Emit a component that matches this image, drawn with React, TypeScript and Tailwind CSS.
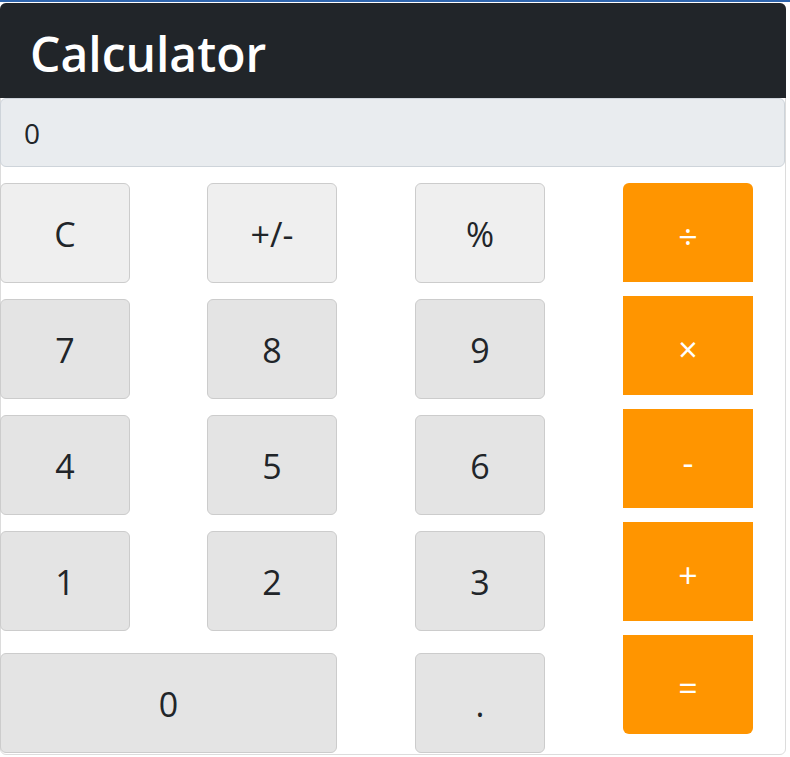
import React from "react";

const font = { fontFamily: '"Open Sans", "Noto Sans", sans-serif' };

function GrayBtn({ label, light, wide }: { label: string; light?: boolean; wide?: boolean }) {
  return (
    <button
      className={`${wide ? "col-span-2 w-[337px]" : "w-[130px]"} h-[100px] flex items-center justify-center rounded-[6px] border border-[#cccccc] text-[34px] text-[#212529] pt-[3px] ${light ? "bg-[#efefef]" : "bg-[#e4e4e4]"}`}
    >
      {label}
    </button>
  );
}

function OrangeBtn({ label, pos }: { label: string; pos: "top" | "mid" | "bottom" }) {
  const r = pos === "top" ? "rounded-t-[6px]" : pos === "bottom" ? "rounded-b-[6px]" : "";
  return (
    <button className={`w-[130px] h-[99px] flex items-center justify-center bg-[#ff9500] text-white text-[34px] pt-[7px] ${r}`}>
      {label}
    </button>
  );
}

export default function App() {
  return (
    <div className="w-[790px] h-[757px] bg-white overflow-hidden" style={font}>
      <div className="h-[2px] bg-[#2f65ad]" />
      <div className="h-[1px]" />
      <div className="w-[786px] h-[752px] border border-[#dcdcdc] rounded-[6px] flex flex-col">
        <div className="h-[95px] -mt-px -mx-px bg-[#212529] rounded-t-[6px] pl-[30px] pt-[20px]">
          <h1 className="text-[48px] leading-[62px] font-semibold text-white">Calculator</h1>
        </div>
        <div className="h-[69px] -ml-px mr-0 bg-[#e9ecef] border border-[#ced4da] rounded-[6px] flex items-center pl-[23px] text-[28px] text-[#212529]">
          0
        </div>
        <div className="flex mt-[16px] -ml-px">
          <div className="grid grid-cols-[207px_208px_130px] gap-y-4">
            <GrayBtn label="C" light />
            <GrayBtn label="+/-" light />
            <GrayBtn label="%" light />
            <GrayBtn label="7" />
            <GrayBtn label="8" />
            <GrayBtn label="9" />
            <GrayBtn label="4" />
            <GrayBtn label="5" />
            <GrayBtn label="6" />
            <GrayBtn label="1" />
            <GrayBtn label="2" />
            <GrayBtn label="3" />
            <div className="col-span-2 mt-[6px]">
              <GrayBtn label="0" wide />
            </div>
            <div className="mt-[6px]">
              <GrayBtn label="." />
            </div>
          </div>
          <div className="ml-[78px] flex flex-col gap-[14px]">
            <OrangeBtn label="÷" pos="top" />
            <OrangeBtn label="×" pos="mid" />
            <OrangeBtn label="-" pos="mid" />
            <OrangeBtn label="+" pos="mid" />
            <OrangeBtn label="=" pos="bottom" />
          </div>
        </div>
      </div>
    </div>
  );
}
